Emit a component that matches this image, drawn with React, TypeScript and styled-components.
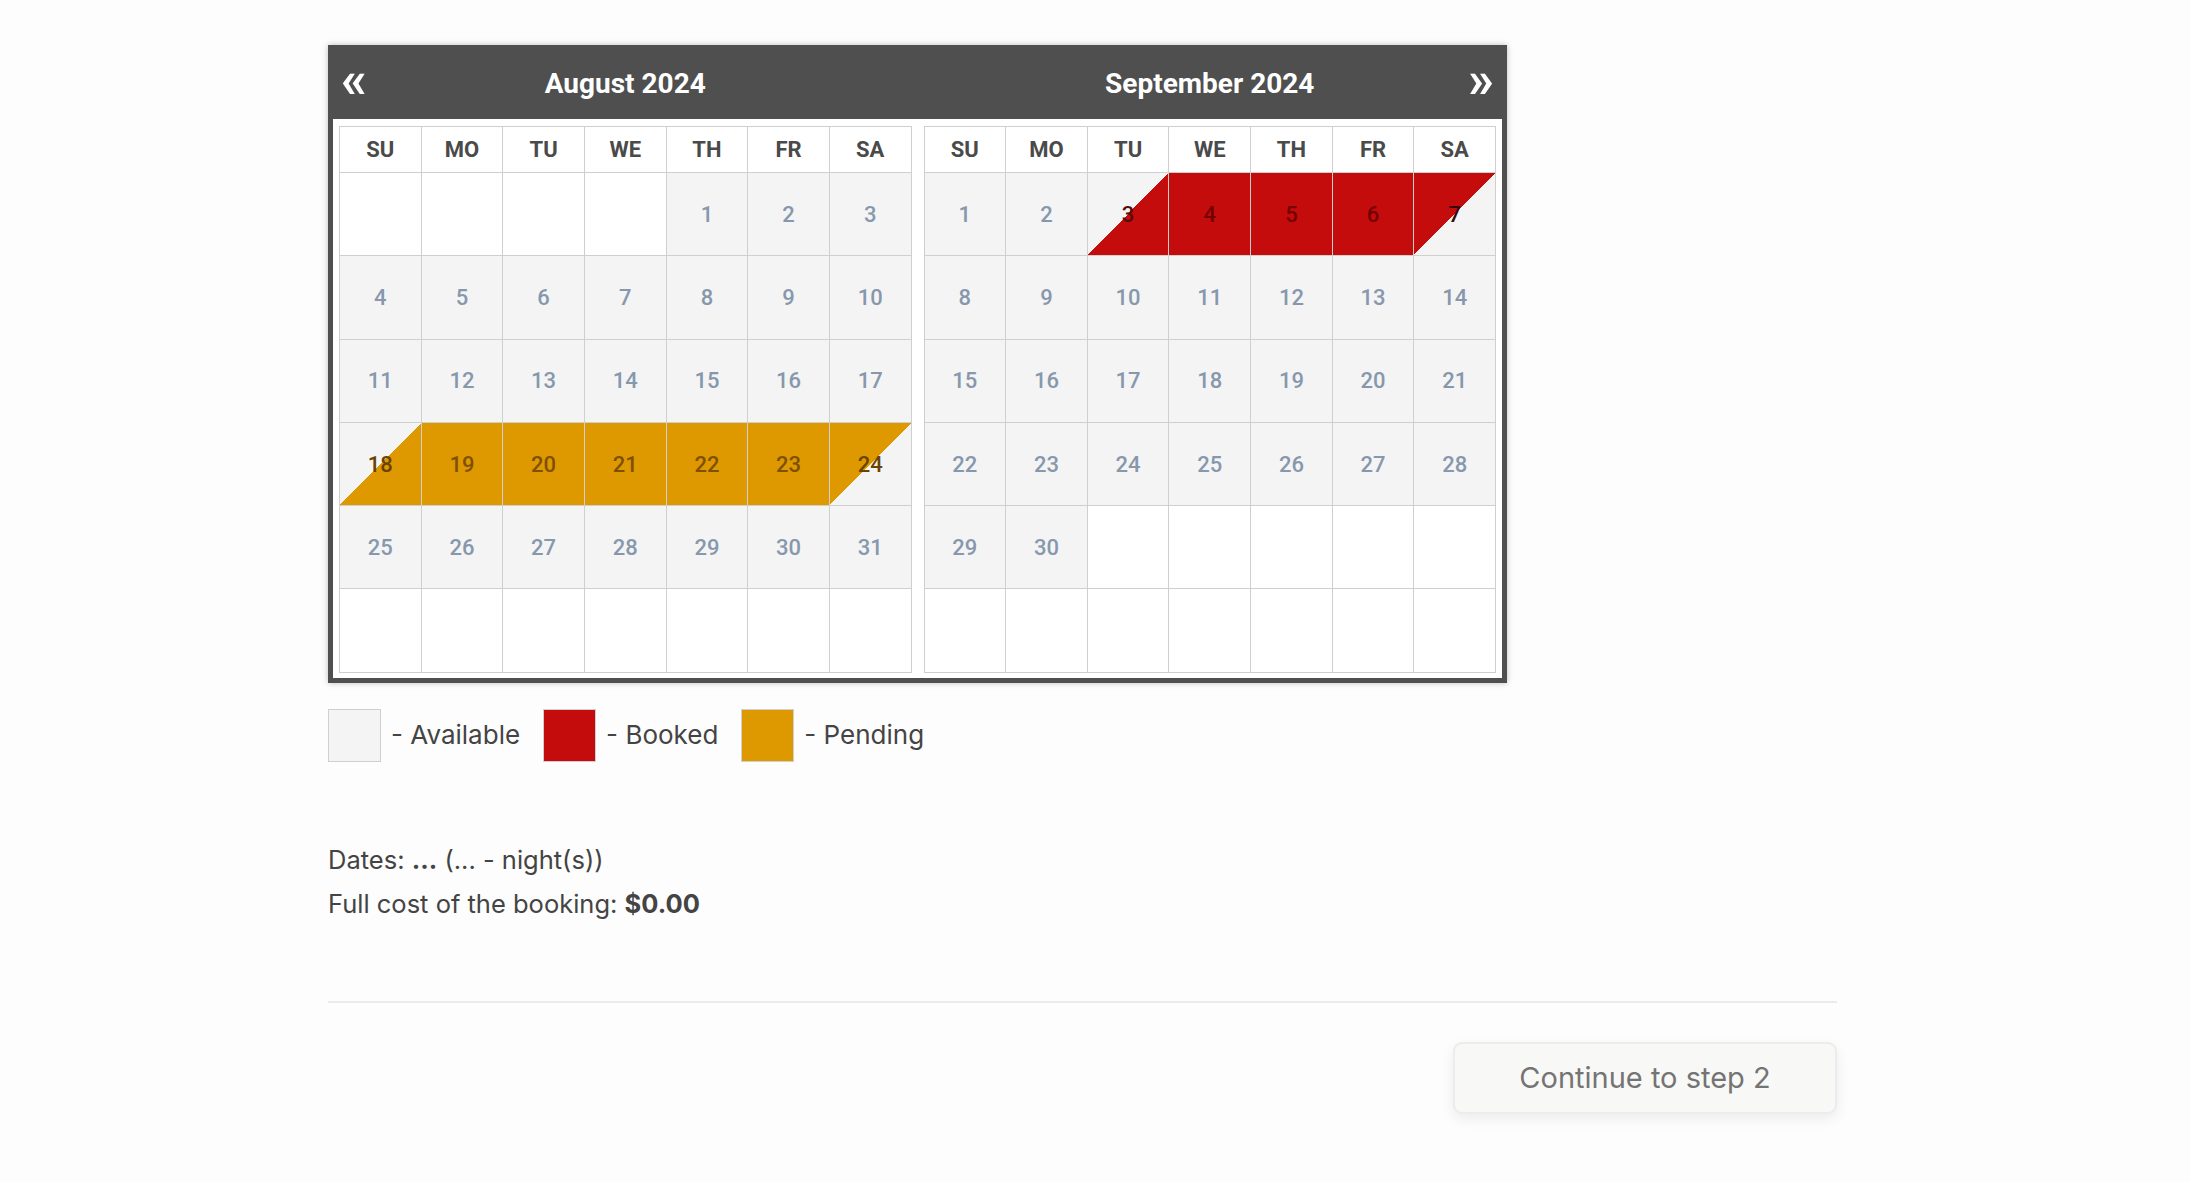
import * as React from 'react';
import styled, { createGlobalStyle, css } from 'styled-components';

type DayKind =
  | 'empty'
  | 'free'
  | 'booked'
  | 'bookedStart'
  | 'bookedEnd'
  | 'pending'
  | 'pendingStart'
  | 'pendingEnd';

type DayCell = { day: number | null; kind: DayKind };

type MonthData = {
  title: string;
  firstWeekday: number;
  days: number;
  marks: Record<number, DayKind>;
};

const FREE = '#f4f4f4';
const BOOKED = '#c40c0c';
const PENDING = '#de9900';
const WEEKDAYS = ['SU', 'MO', 'TU', 'WE', 'TH', 'FR', 'SA'];

const months: MonthData[] = [
  {
    title: 'August 2024',
    firstWeekday: 4,
    days: 31,
    marks: {
      18: 'pendingStart',
      19: 'pending',
      20: 'pending',
      21: 'pending',
      22: 'pending',
      23: 'pending',
      24: 'pendingEnd',
    },
  },
  {
    title: 'September 2024',
    firstWeekday: 0,
    days: 30,
    marks: {
      3: 'bookedStart',
      4: 'booked',
      5: 'booked',
      6: 'booked',
      7: 'bookedEnd',
    },
  },
];

const buildCells = (m: MonthData): DayCell[] => {
  const cells: DayCell[] = [];
  for (let i = 0; i < 42; i++) {
    const day = i - m.firstWeekday + 1;
    if (day < 1 || day > m.days) {
      cells.push({ day: null, kind: 'empty' });
    } else {
      cells.push({ day, kind: m.marks[day] || 'free' });
    }
  }
  return cells;
};

const GlobalStyle = createGlobalStyle`
  body {
    margin: 0;
    background: #fdfdfd;
    font-family: Inter, "Liberation Sans", sans-serif;
    color: #444;
  }
`;

const Page = styled.div`
  width: 1509px;
  padding: 45px 0 60px 328px;
`;

const CalendarFrame = styled.div`
  width: 1179px;
  box-sizing: border-box;
  border: 5px solid #4f4f4f;
  background: #fff;
  box-shadow: 0 0 6px rgba(0, 0, 0, 0.25);
  font-family: Roboto, "Liberation Sans", sans-serif;
`;

const HeaderBar = styled.div`
  display: flex;
  gap: 12px;
  height: 69px;
  padding: 0 6px;
  background: #4f4f4f;
  color: #fff;
`;

const MonthHead = styled.div`
  flex: 1;
  display: grid;
  grid-template-columns: 40px 1fr 40px;
  align-items: center;
`;

const NavArrow = styled.span<{ $side: 'left' | 'right' }>`
  font-size: 52px;
  font-weight: 700;
  line-height: 1;
  margin-top: -10px;
  justify-self: ${p => (p.$side === 'left' ? 'start' : 'end')};
  padding: ${p => (p.$side === 'left' ? '0 0 0 2px' : '0 2px 0 0')};
  cursor: pointer;
`;

const MonthTitle = styled.div`
  text-align: center;
  font-size: 28px;
  font-weight: 700;
  margin-top: -2px;
`;

const Body = styled.div`
  display: flex;
  gap: 12px;
  padding: 7px 6px 5px;
`;

const MonthGrid = styled.div`
  flex: 1;
  display: grid;
  grid-template-columns: repeat(7, 1fr);
  grid-template-rows: 46px repeat(6, 83.3px);
  border-top: 1px solid #cfcfcf;
  border-left: 1px solid #cfcfcf;
`;

const WeekdayCell = styled.div`
  display: flex;
  align-items: center;
  justify-content: center;
  border-right: 1px solid #cfcfcf;
  border-bottom: 1px solid #cfcfcf;
  font-size: 22px;
  font-weight: 700;
  color: #4a4a4a;
`;

const kindStyles: Record<DayKind, ReturnType<typeof css>> = {
  empty: css`
    background: #fff;
  `,
  free: css`
    background: ${FREE};
    color: #8798ad;
  `,
  booked: css`
    background: ${BOOKED};
    color: #740000;
  `,
  bookedStart: css`
    background: linear-gradient(to bottom right, ${FREE} 50%, ${BOOKED} 50%);
    color: #5a0a0a;
  `,
  bookedEnd: css`
    background: linear-gradient(to bottom right, ${BOOKED} 50%, ${FREE} 50%);
    color: #3a0606;
  `,
  pending: css`
    background: ${PENDING};
    color: #7e5000;
  `,
  pendingStart: css`
    background: linear-gradient(to bottom right, ${FREE} 50%, ${PENDING} 50%);
    color: #6b4300;
  `,
  pendingEnd: css`
    background: linear-gradient(to bottom right, ${PENDING} 50%, ${FREE} 50%);
    color: #6b4300;
  `,
};

const DayBox = styled.div<{ $kind: DayKind }>`
  display: flex;
  align-items: center;
  justify-content: center;
  border-right: 1px solid #cfcfcf;
  border-bottom: 1px solid #cfcfcf;
  font-size: 22px;
  font-weight: 500;
  ${p => kindStyles[p.$kind]}
`;

const Legend = styled.div`
  display: flex;
  align-items: center;
  margin-top: 26px;
`;

const Swatch = styled.span<{ $color: string }>`
  width: 53px;
  height: 53px;
  box-sizing: border-box;
  border: 1px solid #cfcfcf;
  background: ${p => p.$color};
`;

const LegendLabel = styled.span`
  font-size: 26px;
  margin: -2px 23px 0 10px;
  color: #444;
`;

const Summary = styled.div`
  margin-top: 76px;
  font-size: 25.5px;
  line-height: 44px;
  color: #444;

  b {
    font-weight: 700;
  }
`;

const Divider = styled.hr`
  margin: 75px 0 0;
  border: none;
  border-top: 2px solid #ebebeb;
`;

const Actions = styled.div`
  display: flex;
  justify-content: flex-end;
  margin-top: 39px;
`;

const NextButton = styled.button`
  width: 384px;
  height: 72px;
  border: 2px solid #ececec;
  border-radius: 9px;
  background: #f8f8f7;
  box-shadow: 0 5px 14px rgba(0, 0, 0, 0.07);
  font-family: Inter, "Liberation Sans", sans-serif;
  font-size: 29px;
  color: #747474;
  cursor: pointer;
`;

const Month = ({ data }: { data: MonthData }) => (
  <MonthGrid>
    {WEEKDAYS.map(w => (
      <WeekdayCell key={w}>{w}</WeekdayCell>
    ))}
    {buildCells(data).map((c, i) => (
      <DayBox key={i} $kind={c.kind}>
        {c.day}
      </DayBox>
    ))}
  </MonthGrid>
);

export default function App() {
  return (
    <>
      <GlobalStyle />
      <Page>
        <CalendarFrame>
          <HeaderBar>
            <MonthHead>
              <NavArrow $side='left'>«</NavArrow>
              <MonthTitle>{months[0].title}</MonthTitle>
              <span />
            </MonthHead>
            <MonthHead>
              <span />
              <MonthTitle>{months[1].title}</MonthTitle>
              <NavArrow $side='right'>»</NavArrow>
            </MonthHead>
          </HeaderBar>
          <Body>
            {months.map(m => (
              <Month key={m.title} data={m} />
            ))}
          </Body>
        </CalendarFrame>

        <Legend>
          <Swatch $color={FREE} />
          <LegendLabel>- Available</LegendLabel>
          <Swatch $color={BOOKED} />
          <LegendLabel>- Booked</LegendLabel>
          <Swatch $color={PENDING} />
          <LegendLabel>- Pending</LegendLabel>
        </Legend>

        <Summary>
          <div>
            Dates: <b>...</b> (... - night(s))
          </div>
          <div>
            Full cost of the booking: <b>$0.00</b>
          </div>
        </Summary>

        <Divider />

        <Actions>
          <NextButton>Continue to step 2</NextButton>
        </Actions>
      </Page>
    </>
  );
}
